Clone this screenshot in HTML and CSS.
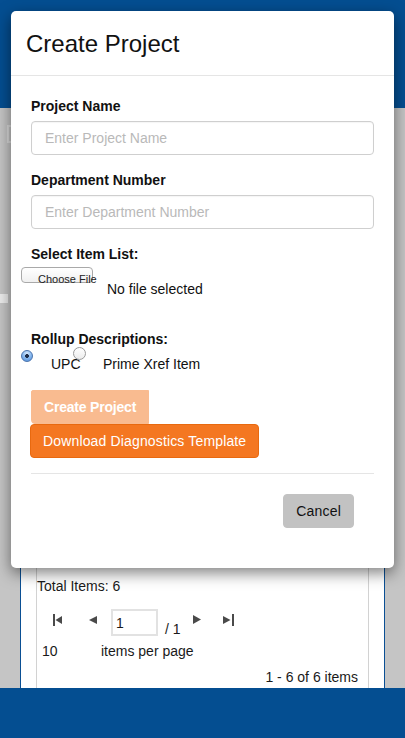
FILE: index.html
```html
<!DOCTYPE html>
<html lang="en">
<head>
<meta charset="utf-8">
<title>Create Project</title>
<link rel="stylesheet" href="styles.css">
</head>
<body>
<div class="page">
  <header class="topbar"></header>
  <main class="main">
    <div class="ghost-bracket"></div>
    <div class="ghost-block"></div>
    <section class="grid-panel">
      <div class="grid-inner">
        <div class="total">Total Items: 6</div>
        <div class="pager">
          <svg class="pg pg-first" width="11" height="12" viewBox="0 0 11 12"><rect x="0" y="0" width="2" height="12"/><polygon points="2.5,6 9,2 9,10"/></svg>
          <svg class="pg pg-prev" width="8" height="8" viewBox="0 0 8 8"><polygon points="0,4 8,0 8,8"/></svg>
          <div class="page-box">1</div>
          <span class="page-of">/ 1</span>
          <svg class="pg pg-next" width="8" height="9" viewBox="0 0 8 9"><polygon points="0,0 8,4.5 0,9"/></svg>
          <svg class="pg pg-last" width="12" height="12" viewBox="0 0 12 12"><polygon points="0,2 7.5,6 0,10"/><rect x="9" y="0" width="2" height="12"/></svg>
        </div>
        <div class="per-page"><span class="page-size">10</span><span>items per page</span></div>
        <div class="range">1 - 6 of 6 items</div>
      </div>
    </section>
  </main>
  <footer class="bottombar"></footer>
</div>

<div class="modal">
  <div class="modal-header">
    <h4 class="modal-title">Create Project</h4>
  </div>
  <div class="modal-body">
    <div class="form-group">
      <div class="label">Project Name</div>
      <div class="text-field"><span class="placeholder">Enter Project Name</span></div>
    </div>
    <div class="form-group">
      <div class="label">Department Number</div>
      <div class="text-field"><span class="placeholder">Enter Department Number</span></div>
    </div>
    <div class="form-group form-group-file">
      <div class="label">Select Item List:</div>
      <div class="file-row">
        <div class="file-btn">Choose File</div>
        <span class="file-name">No file selected</span>
      </div>
    </div>
    <div class="form-group form-group-radio">
      <div class="label">Rollup Descriptions:</div>
      <div class="radio-row">
        <span class="radio radio-on"></span>
        <span class="radio-text radio-text-upc">UPC</span>
        <span class="radio radio-off"></span>
        <span class="radio-text radio-text-prime">Prime Xref Item</span>
      </div>
    </div>
    <div class="actions">
      <button class="btn btn-create" type="button">Create Project</button>
      <button class="btn btn-download" type="button">Download Diagnostics Template</button>
    </div>
    <div class="modal-footer">
      <button class="btn btn-cancel" type="button">Cancel</button>
    </div>
  </div>
</div>
</body>
</html>
```

FILE: styles.css
```css
html, body {
  margin: 0;
  padding: 0;
}
body {
  width: 405px;
  height: 738px;
  overflow: hidden;
  position: relative;
  font-family: "Liberation Sans", Arial, Helvetica, sans-serif;
  font-size: 14px;
  line-height: 20px;
  color: #111;
  background: #c5c5c5;
}
.page {
  display: flex;
  flex-direction: column;
  height: 738px;
}
.topbar {
  height: 108px;
  background: #044e91;
  flex: none;
}
.main {
  height: 580px;
  flex: none;
  display: flex;
  flex-direction: column;
  background: #c5c5c5;
  overflow: hidden;
}
.ghost-bracket {
  margin: 17px 0 0 7px;
  width: 4px;
  height: 14px;
  border: 2px solid #dadada;
  border-right: 0;
  flex: none;
}
.ghost-block {
  margin-top: 151px;
  width: 8px;
  height: 9px;
  background: #ececec;
  flex: none;
}
.grid-panel {
  margin: 100px 0 0 20px;
  width: 365px;
  box-sizing: border-box;
  flex: 1;
  display: flex;
  background: #fff;
  border-left: 1px solid #0a4f94;
  border-right: 1px solid #0a4f94;
  padding: 0 15px;
  overflow: hidden;
}
.grid-inner {
  flex: 1;
  border-left: 1px solid #d2d2d2;
  border-right: 1px solid #d2d2d2;
  padding: 173px 10px 0 0;
  color: #1a1a1a;
}
.total {
  height: 20px;
}
.pager {
  margin-top: 13px;
  height: 32px;
  display: flex;
  align-items: flex-start;
}
.pg {
  fill: #4a4a4a;
  flex: none;
}
.pg-first {
  margin: 5px 0 0 16px;
}
.pg-prev {
  margin: 7px 0 0 25px;
}
.page-box {
  margin-left: 14px;
  width: 47px;
  height: 27px;
  box-sizing: border-box;
  border: 2px solid #e2e2e2;
  padding: 2px 0 0 3px;
  line-height: 20px;
}
.page-of {
  margin: 10px 0 0 7px;
}
.pg-next {
  margin: 6px 0 0 12px;
}
.pg-last {
  margin: 5px 0 0 22px;
}
.per-page {
  display: flex;
  height: 20px;
}
.page-size {
  margin-left: 5px;
  width: 59px;
}
.range {
  margin-top: 6px;
  text-align: right;
}
.bottombar {
  height: 50px;
  flex: none;
  background: #044e91;
}

/* modal */
.modal {
  position: absolute;
  left: 11px;
  top: 11px;
  width: 383px;
  background: #fff;
  border-radius: 5px;
  box-shadow: 0 5px 15px rgba(0, 0, 0, 0.5);
}
.modal-header {
  padding: 20px 15px 18px;
  border-bottom: 1px solid #e5e5e5;
}
.modal-title {
  margin: 0;
  font-size: 24px;
  line-height: 26px;
  font-weight: normal;
  color: #111;
}
.modal-body {
  padding: 20px;
}
.form-group {
  margin-bottom: 15px;
}
.label {
  font-weight: bold;
  margin-bottom: 5px;
  color: #111;
}
.text-field {
  height: 34px;
  box-sizing: border-box;
  border: 1px solid #cfcfcf;
  border-radius: 4px;
  padding: 6px 13px;
  box-shadow: inset 0 1px 1px rgba(0, 0, 0, 0.04);
}
.placeholder {
  color: #b9b9b9;
}
.form-group-file {
  margin-bottom: 30px;
}
.file-row {
  display: flex;
  align-items: flex-start;
  margin: -2px 0 0 -10px;
}
.file-btn {
  width: 72px;
  height: 16px;
  box-sizing: border-box;
  border: 1px solid #a9a9a9;
  border-radius: 4px;
  background: linear-gradient(#ffffff, #f0f0f0);
  padding: 5px 0 0 16px;
  font-size: 11px;
  line-height: 13px;
  white-space: nowrap;
  color: #222;
  flex: none;
}
.file-name {
  margin: 12px 0 0 14px;
  color: #111;
}
.form-group-radio {
  margin-bottom: 16px;
}
.radio-row {
  display: flex;
  align-items: flex-start;
  margin: -7px 0 0 -10px;
}
.radio {
  box-sizing: border-box;
  border-radius: 50%;
  flex: none;
}
.radio-on {
  margin-top: 3px;
  width: 12px;
  height: 12px;
  border: 1px solid #4b74ad;
  background: radial-gradient(circle at 50% 50%, #1d2d4a 0, #1d2d4a 1.6px, transparent 2.2px),
    radial-gradient(circle at 50% 25%, #d6e7fb 0, #8dbcf0 45%, #4d8ad8 100%);
}
.radio-off {
  width: 13px;
  height: 13px;
  border: 1px solid #9a9a9a;
  background: linear-gradient(#ffffff, #ececec);
}
.radio-text {
  margin-top: 7px;
  white-space: nowrap;
}
.radio-text-upc {
  margin-left: 18px;
  width: 22px;
}
.radio-text-prime {
  margin-left: 17px;
}
.actions {
  display: flex;
  flex-direction: column;
  align-items: flex-start;
}
.btn {
  font-family: "Liberation Sans", Arial, Helvetica, sans-serif;
  font-size: 14px;
  line-height: 20px;
  padding: 6px 12px;
  border: 1px solid transparent;
  border-radius: 4px;
  margin: 0;
  cursor: pointer;
  white-space: nowrap;
}
.btn-create {
  background: #f9bb90;
  border-color: #f9bb90;
  color: #fff;
  font-weight: bold;
  letter-spacing: -0.2px;
  border-radius: 2px 0 0 4px;
}
.btn-download {
  margin-left: -1px;
  background: #f47721;
  border-color: #e8690f;
  color: #fff;
  letter-spacing: 0.15px;
}
.modal-footer {
  margin-top: 15px;
  border-top: 1px solid #e5e5e5;
  padding: 20px 20px 20px 0;
  display: flex;
  justify-content: flex-end;
}
.btn-cancel {
  background: #c2c2c2;
  border-color: #c2c2c2;
  color: #111;
  letter-spacing: 0.2px;
}
```
